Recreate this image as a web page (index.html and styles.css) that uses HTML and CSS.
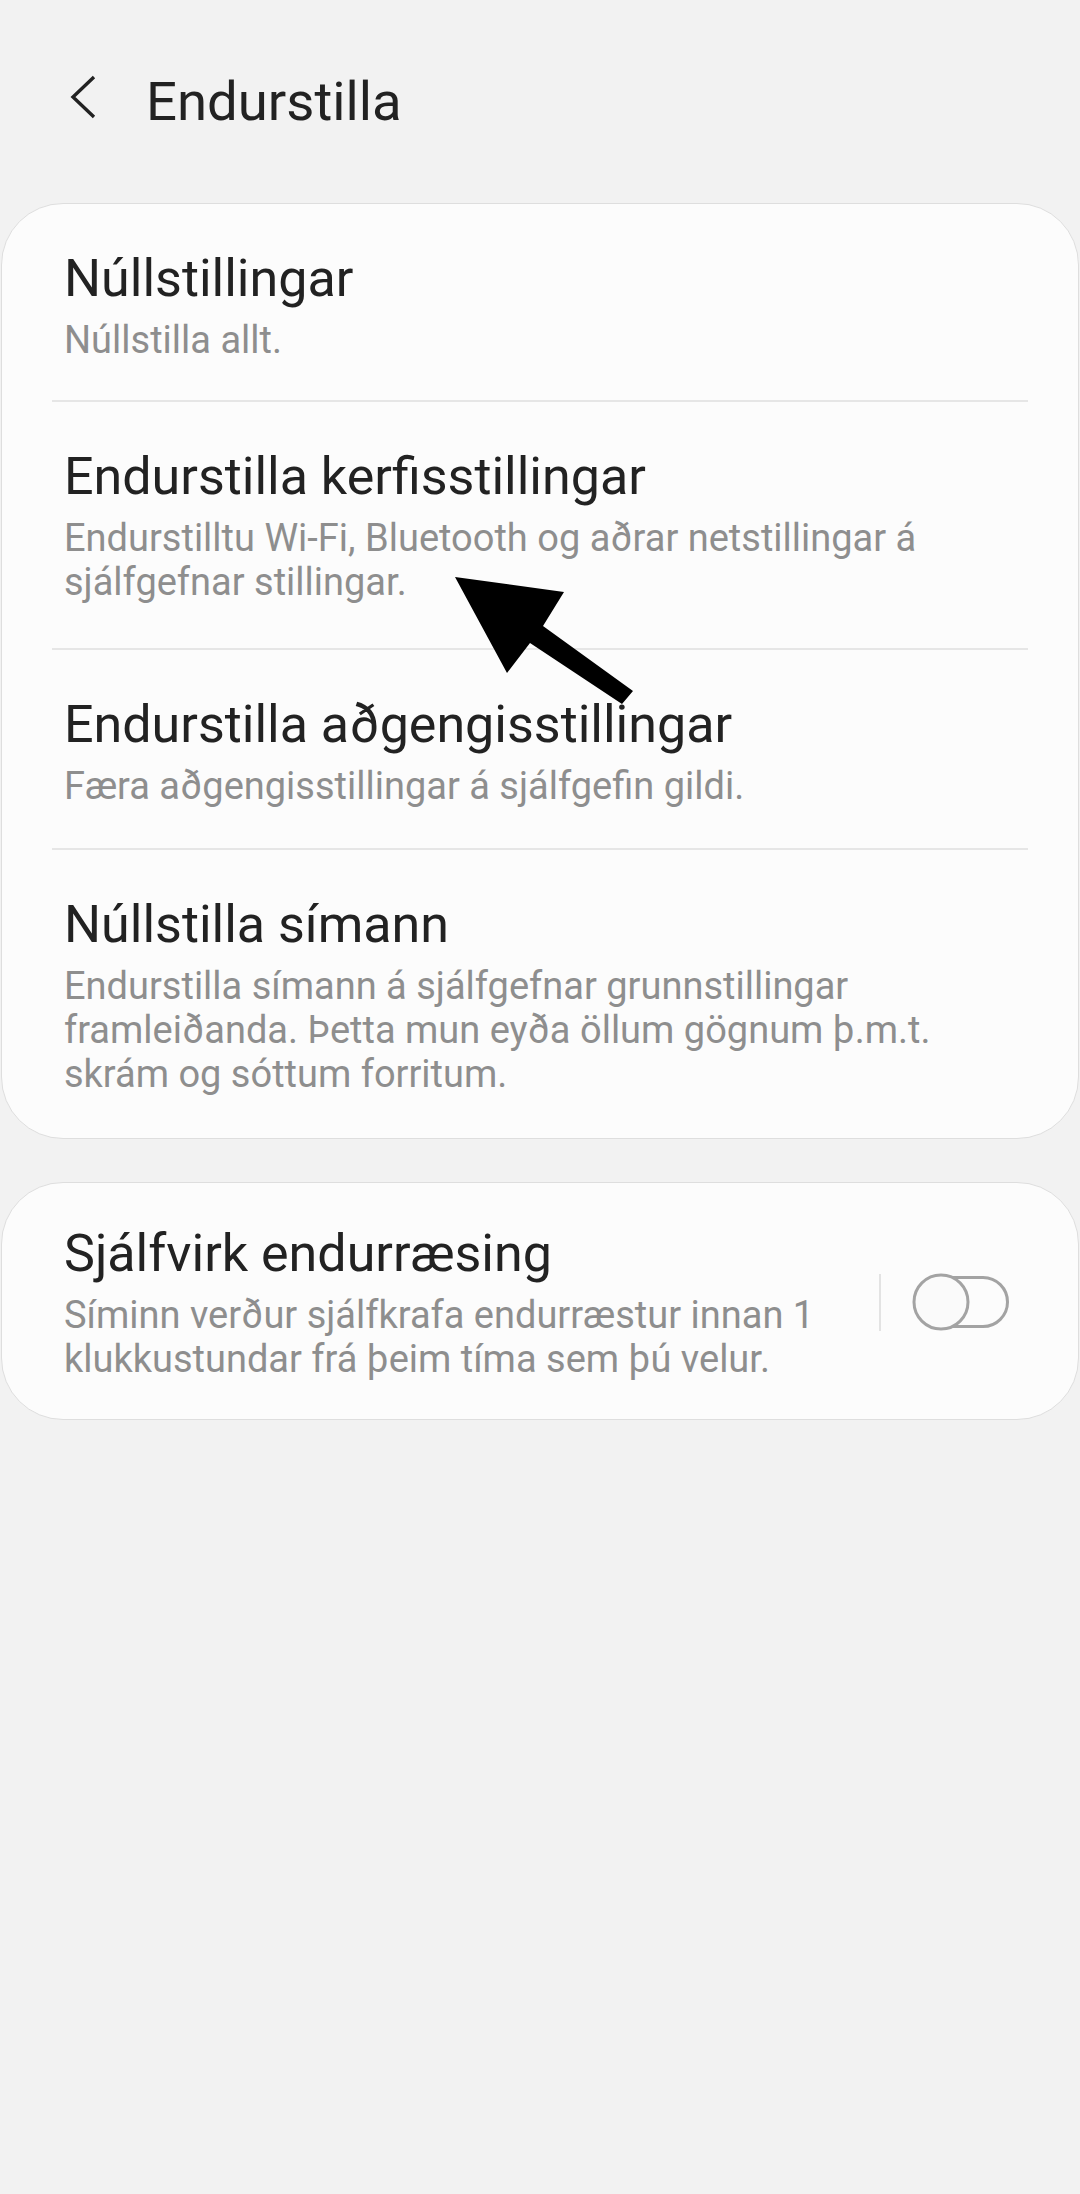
FILE: index.html
```html
<!DOCTYPE html>
<html lang="is">
<head>
    <meta charset="UTF-8">
    <title>Endurstilla</title>
    <link rel="stylesheet" href="styles.css">
</head>
<body>
    <div class="screen">
        <header class="top-bar">
            <svg class="back" width="28" height="46" viewBox="0 0 28 46">
                <polyline points="25,3 4,23 25,43" fill="none" stroke="#222" stroke-width="3.4"/>
            </svg>
            <h1>Endurstilla</h1>
        </header>

        <section class="card card-list">
            <div class="item item-first">
                <div class="item-title">Núllstillingar</div>
                <div class="item-sub">Núllstilla allt.</div>
            </div>
            <div class="divider"></div>
            <div class="item item-tall">
                <div class="item-title">Endurstilla kerfisstillingar</div>
                <div class="item-sub">Endurstilltu Wi-Fi, Bluetooth og aðrar netstillingar á sjálfgefnar stillingar.</div>
            </div>
            <div class="divider"></div>
            <div class="item">
                <div class="item-title">Endurstilla aðgengisstillingar</div>
                <div class="item-sub">Færa aðgengisstillingar á sjálfgefin gildi.</div>
            </div>
            <div class="divider"></div>
            <div class="item">
                <div class="item-title">Núllstilla símann</div>
                <div class="item-sub">Endurstilla símann á sjálfgefnar grunnstillingar framleiðanda. Þetta mun eyða öllum gögnum þ.m.t. skrám og sóttum forritum.</div>
            </div>
        </section>

        <section class="card card-switch">
            <div class="item switch-row">
                <div class="switch-text">
                    <div class="item-title">Sjálfvirk endurræsing</div>
                    <div class="item-sub">Síminn verður sjálfkrafa endurræstur innan 1 klukkustundar frá þeim tíma sem þú velur.</div>
                </div>
                <div class="v-line"></div>
                <svg class="toggle" width="100" height="60" viewBox="0 0 100 60">
                    <rect x="6.5" y="5.5" width="90" height="49" rx="24.5" fill="none" stroke="#a3a3a3" stroke-width="3"/>
                    <circle cx="30" cy="30" r="27" fill="#fafafa" stroke="#a3a3a3" stroke-width="3"/>
                </svg>
            </div>
        </section>

        <!-- pointer drawn over the list -->
        <svg class="pointer" width="190" height="140" viewBox="0 0 190 140">
            <polygon points="5,7 114,22 93,56 183,121 172,134 80,73 57,103" fill="#000"/>
        </svg>
    </div>
</body>
</html>
```

FILE: styles.css
```css
body {
    margin: 0;
    background-color: #f2f2f2;
    font-family: Roboto, "Liberation Sans", sans-serif;
    color: #222;
}

.screen {
    position: relative;
    width: 1080px;
    min-height: 2194px;
}

.top-bar {
    display: flex;
    align-items: center;
    padding: 69px 0 70px 69px;
}

.back {
    margin-top: -8px;
    margin-right: 49px;
}

.top-bar h1 {
    margin: 0;
    font-size: 54.5px;
    font-weight: 400;
    line-height: 64px;
    color: #222;
}

.card {
    margin: 0 1px;
    background-color: #fcfcfc;
    border: 1px solid #dedede;
    border-radius: 62px;
}

.card-list {
    padding-bottom: 2px;
}

.item {
    padding: 44px 58px 40px 62px;
}

.item-first {
    padding-bottom: 38px;
}

.item-tall {
    padding-bottom: 44px;
}

.item-title {
    font-size: 52px;
    line-height: 62px;
    color: #222;
}

.item-sub {
    margin-top: 8px;
    font-size: 38px;
    line-height: 44px;
    color: #8e8e8e;
}

.divider {
    height: 2px;
    margin: 0 50px;
    background-color: #e6e6e6;
}

.card-switch {
    margin-top: 43px;
}

.switch-row {
    display: flex;
    align-items: center;
    padding: 40px 67px 38px 62px;
}

.switch-text {
    flex: 1;
    margin-right: 30px;
}

.v-line {
    width: 2px;
    height: 57px;
    background-color: #e3e3e3;
    margin-right: 30px;
}

.toggle {
    display: block;
}

.pointer {
    position: absolute;
    left: 450px;
    top: 570px;
}
```
